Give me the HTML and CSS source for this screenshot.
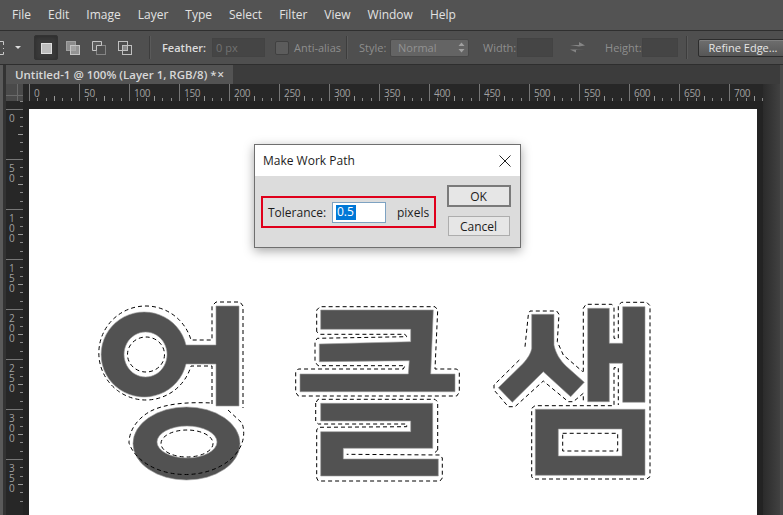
FILE: index.html
```html
<!DOCTYPE html>
<html lang="en">
<head>
<meta charset="utf-8">
<title>Make Work Path</title>
<link rel="stylesheet" href="styles.css">
</head>
<body>
<div class="app">
  <nav class="menubar">
    <span>File</span><span>Edit</span><span>Image</span><span>Layer</span><span>Type</span><span>Select</span><span>Filter</span><span>View</span><span>Window</span><span>Help</span>
  </nav>
  <div class="options">
    <svg class="marquee" width="5" height="16" viewBox="0 0 5 16"><path d="M0 1.5H3.5V5M3.5 8V9M3.5 12V14.5H0" fill="none" stroke="#c8c8c8"/></svg>
    <span class="caret"></span>
    <span class="sep sep-a"></span>
    <div class="modes">
      <span class="mode active"><svg width="14" height="14" viewBox="0 0 14 14"><rect x="2.5" y="2.5" width="10" height="10" fill="#bdbdbd" stroke="#e0e0e0"/></svg></span>
      <span class="mode"><svg width="16" height="16" viewBox="0 0 16 16"><rect x="1.5" y="1.5" width="9" height="9" fill="#8c8c8c" stroke="#a0a0a0"/><rect x="5.5" y="5.5" width="9" height="9" fill="#aaa" fill-opacity=".75" stroke="#c4c4c4"/></svg></span>
      <span class="mode"><svg width="16" height="16" viewBox="0 0 16 16"><rect x="5.5" y="5.5" width="9" height="9" fill="none" stroke="#858585"/><path d="M1.5 1.5H10.5V5.5H5.5V10.5H1.5Z" fill="#5c5c5c" stroke="#c4c4c4"/></svg></span>
      <span class="mode"><svg width="16" height="16" viewBox="0 0 16 16"><rect x="1.5" y="1.5" width="9" height="9" fill="none" stroke="#c0c0c0"/><rect x="5.5" y="5.5" width="9" height="9" fill="none" stroke="#c0c0c0"/><rect x="6" y="6" width="4" height="4" fill="#8a8a8a"/></svg></span>
    </div>
    <span class="sep sep-b"></span>
    <span class="label strong feather-label">Feather:</span>
    <span class="field feather">0 px</span>
    <span class="check"></span>
    <span class="label dim anti">Anti-alias</span>
    <span class="sep sep-c"></span>
    <span class="label dim style-label">Style:</span>
    <span class="select">Normal<svg width="7" height="11" viewBox="0 0 7 11"><path d="M3.5 0.5L6.5 4H0.5ZM3.5 10.5L0.5 7H6.5Z" fill="#a0a0a0"/></svg></span>
    <span class="label dim width-label">Width:</span>
    <span class="field blank"></span>
    <svg class="swap" width="17" height="15" viewBox="0 0 17 15"><path d="M1 5H10V2L16 5.5L10 6.5ZM16 9H7V12.5L1 9.5Z" fill="#858585"/></svg>
    <span class="label dim height-label">Height:</span>
    <span class="field blank"></span>
    <span class="sep sep-d"></span>
    <span class="refine">Refine Edge...</span>
  </div>
  <div class="work">
    <div class="gutter"></div>
    <div class="main">
      <div class="tabs">
        <div class="tab"><span class="tab-title">Untitled-1 @ 100% (Layer 1, RGB/8) *</span><span class="tab-close">×</span></div>
      </div>
      <div class="viewport">
        <div class="corner"></div>
        <div class="hruler">
          <span class="hlead"></span>
          <span class="hm">0</span><span class="hm">50</span><span class="hm">100</span><span class="hm">150</span><span class="hm">200</span><span class="hm">250</span><span class="hm">300</span><span class="hm">350</span><span class="hm">400</span><span class="hm">450</span><span class="hm">500</span><span class="hm">550</span><span class="hm">600</span><span class="hm">650</span><span class="hm">700</span>
        </div>
        <div class="vruler">
          <span class="vlead"></span>
          <span class="vm"><b>0</b></span><span class="vm"><b>50</b></span><span class="vm"><b>100</b></span><span class="vm"><b>150</b></span><span class="vm"><b>200</b></span><span class="vm"><b>250</b></span><span class="vm"><b>300</b></span><span class="vm"><b>350</b></span>
        </div>
        <div class="pasteboard">
          <div class="canvas">
            <svg class="art" width="728" height="406" viewBox="29 109 728 406">
              <g class="shape">
                <path fill-rule="evenodd" d="M216 306H239V406H216V364H186A43 42.5 0 1 1 186 345H216ZM145.500 332A21.500 22.500 0 1 0 145.600 332Z"/>
                <path fill-rule="evenodd" d="M133 443.500A53.500 36.500 0 1 0 240 443.500A53.500 36.500 0 1 0 133 443.500ZM157 442A30 16 0 1 1 217 442A30 16 0 1 1 157 442Z"/>
                <path d="M320.700 310H433.300L430.700 374H455V391.700H300V374H408.300L409.300 360.700L319.300 361.700V344L410.700 341.700V329.300H320.700Z"/>
                <path d="M320.700 403.300H432.700V448.300H343.300V459H438.300V476H320.700V431.700H410.700V421H320.700Z"/>
                <path d="M531.700 314.300H554V345C556 354 560 360 566 366L584.300 382.300L570.700 396.700L543.300 371.700L512.300 402.300L498.300 387.700L523.300 363.300C528 358 531 353 531.700 348.300Z"/>
                <path d="M587.700 308.300H609.300V343.300H622.700V306.700H645V402.300H622.700V363.300H609.300V401.700H587.700Z"/>
                <path fill-rule="evenodd" d="M535.300 409.300H645V475.300H535.300ZM558.300 429V456H622V429Z"/>
              </g>
              <g class="ants">
                <path d="M212 404V366H191A47 47 0 1 1 191 340H212V306L216 302H240L243 306V408"/>
                <path d="M228 410L242 423A57.500 41 0 0 1 129 443A57.500 41 0 0 1 149 412C165 403 190 402 212 403"/>
                <ellipse cx="146" cy="354.500" rx="18.500" ry="17.500"/>
                <ellipse cx="187" cy="443.500" rx="26" ry="13.500"/>
                <path d="M316.700 331.700V310L320 306.700H435L437.700 310L435 369H456.700L459.300 372.300V392.300L456.700 396H298.300L295.700 392.300V372.300L298.300 369H403.300L405 365.700H318L315 361.700V341.700L317.300 338.300L406.700 336.700L405 334.300H320Z"/>
                <path d="M315.700 403V421.700L318.300 424H406.700V426.700L318.300 427.300L316.700 430V478L318.300 481H440L442.300 478V458L440 455L346.700 454.300M437.700 450V402L435 399.300H318L315.700 403M437.700 450L435 452.500"/>
                <path d="M525 346.700L528.300 315L530 311H556.700L559 314.300L557.300 341.700L563.300 355L582.700 371.700M519.300 360L494 385V390L508.300 406.700H515L543.300 381L568.300 401.700H573.300L583.300 393.300V402"/>
                <path d="M583.300 371.700V308.300L586 304.300H611.700L614 307.700V338.300H618.300V305L621.700 302.300H646.700L650 305.700V476.700L646.700 479H533.300L531.700 476.700V408.300L535 405.700H614V367.700H618.300V405"/>
                <rect x="562.700" y="433.300" width="55" height="17.700"/>
              </g>
            </svg>
            <div class="dialog">
              <div class="dlg-title">
                <span>Make Work Path</span>
                <svg width="12" height="12" viewBox="0 0 12 12"><path d="M0.500 0.500L11.500 11.500M11.500 0.500L0.500 11.500" stroke="#222" fill="none"/></svg>
              </div>
              <div class="dlg-body">
                <div class="tolerance">
                  <span class="tol-label">Tolerance:</span>
                  <span class="tol-input"><span class="tol-sel">0.5</span></span>
                  <span class="tol-unit">pixels</span>
                </div>
                <div class="dlg-buttons">
                  <span class="btn btn-ok">OK</span>
                  <span class="btn">Cancel</span>
                </div>
              </div>
            </div>
          </div>
        </div>
      </div>
    </div>
    <div class="scroll"></div>
    <div class="edge"></div>
  </div>
</div>
</body>
</html>
```
FILE: styles.css
```css
* { box-sizing: border-box; }
html, body { margin: 0; height: 100%; overflow: hidden; background: #535353; }
body { font-family: "Open Sans", "Liberation Sans", sans-serif; }

.app { width: 783px; height: 515px; display: flex; flex-direction: column; overflow: hidden; }

/* menu bar */
.menubar {
  height: 31px; flex: none; display: flex; align-items: center; gap: 17px;
  padding: 0 0 2px 12px; background: #535353; border-bottom: 1px solid #2f2f2f;
  color: #e2e2e2; font-size: 12px;
}

/* options bar */
.options {
  height: 34px; flex: none; display: flex; align-items: center;
  background: #4f4f4f; border-bottom: 1px solid #2e2e2e; font-size: 11px;
}
.marquee { flex: none; }
.caret {
  flex: none; margin-left: 10px; width: 0; height: 0;
  border-left: 3px solid transparent; border-right: 3px solid transparent; border-top: 3px solid #ddd;
}
.sep { flex: none; width: 1px; height: 23px; background: #3d3d3d; box-shadow: 1px 0 0 #5a5a5a; }
.sep-a { margin-left: 5px; background: transparent; box-shadow: none; margin-right: 7px; }
.sep-b { margin-left: 11px; }
.sep-c { margin-left: 11px; }
.sep-d { margin-left: 8px; }
.modes { display: flex; flex: none; align-items: center; }
.mode { width: 26px; height: 25px; display: flex; align-items: center; justify-content: center; }
.mode.active { width: 24px; background: #3a3a3a; border: 1px solid #333; border-radius: 2px; box-shadow: inset 0 1px 4px #2c2c2c; margin-right: 2px; }
.label { flex: none; white-space: nowrap; }
.strong { color: #dcdcdc; font-weight: 600; }
.dim { color: #8e8e8e; }
.feather-label { margin-left: 12px; }
.field {
  flex: none; height: 19px; background: #454545; border: 1px solid #434343; color: #727272;
  display: flex; align-items: center; padding-left: 3px;
}
.feather { width: 53px; margin-left: 6px; }
.check { flex: none; width: 14px; height: 14px; margin-left: 10px; background: #5c5c5c; border: 1px solid #404040; border-radius: 2px; }
.anti { margin-left: 5px; width: 41px; }
.style-label { margin-left: 12px; width: 25px; }
.select {
  flex: none; width: 79px; height: 18px; margin-left: 6px; padding: 0 3px 0 7px;
  display: flex; align-items: center; justify-content: space-between;
  background: #646464; border: 1px solid #484848; border-radius: 2px; color: #929292;
}
.width-label { margin-left: 14px; width: 29px; }
.blank { width: 36px; margin-left: 5px; }
.swap { flex: none; margin: 0 0 0 16px; }
.height-label { margin-left: 19px; width: 32px; }
.refine {
  flex: none; width: 90px; height: 18px; margin-left: 11px; display: flex; align-items: center; justify-content: center;
  color: #e6e6e6; border: 1px solid #2c2c2c; border-radius: 2px;
  background: linear-gradient(#6e6e6e, #565656); box-shadow: inset 0 1px 0 #808080;
}

/* document area */
.work { flex: 1; min-height: 0; display: flex; }
.gutter { flex: none; width: 6px; background: linear-gradient(90deg, #5a5a5a 0 3px, #333 3px 6px); }
.main { flex: 1; min-width: 0; display: flex; flex-direction: column; }
.edge { flex: none; width: 3px; background: #4a4a4a; position: absolute; right: 0; top: 65px; bottom: 0; }
.tabs { height: 19px; flex: none; display: flex; background: #3c3c3c; margin-right: -17px; position: relative; }
.tab {
  width: 227px; display: flex; align-items: center; justify-content: space-between; padding: 0 9px 0 9px;
  background: #535353; color: #d8d8d8; font-size: 11.500px; font-weight: 600; white-space: nowrap;
}
.tab-close { color: #d8d8d8; font-size: 12px; }
.scroll { flex: none; width: 17px; margin-top: 19px; background: linear-gradient(90deg, #2b2b2b, #414141); margin-right: 3px; }

.viewport { flex: 1; min-height: 0; display: grid; grid-template-columns: 17px 1fr; grid-template-rows: 17px 1fr; overflow: hidden; }
.corner {
  background-color: #4a4a4a;
  background-image: linear-gradient(#6a6a6a 0 0), linear-gradient(#6a6a6a 0 0);
  background-repeat: no-repeat; background-size: 100% 1px, 1px 100%; background-position: 0 11px, 11px 0;
}

/* rulers */
.hruler {
  display: flex; overflow: hidden; background: #272727; color: #a0a0a0; font-size: 10px; line-height: 12px;
}
.hlead {
  flex: none; width: 6px;
  background: repeating-linear-gradient(90deg, #888 0 1px, transparent 1px 8.333px) -2.333px 100% / 100% 3px no-repeat;
}
.hm {
  flex: none; width: 50px; padding: 3px 0 0 4px; letter-spacing: -.3px;
  border-left: 1px solid #777;
  background:
    linear-gradient(#999, #999) 24px 100% / 1px 5px no-repeat,
    repeating-linear-gradient(90deg, transparent 0 7.333px, #888 7.333px 8.333px) 0 100% / 100% 3px no-repeat;
}
.vruler { display: flex; flex-direction: column; overflow: hidden; background: #272727; color: #a0a0a0; font-size: 10px; }
.vlead { flex: none; height: 8px; border-bottom: 0; background: repeating-linear-gradient(#888 0 1px, transparent 1px 8.333px) 100% 0 / 3px 100% no-repeat; }
.vm {
  flex: none; height: 50px; padding: 3px 0 0 3px; border-top: 1px solid #777;
  background:
    linear-gradient(#999, #999) 100% 24px / 5px 1px no-repeat,
    repeating-linear-gradient(transparent 0 7.333px, #888 7.333px 8.333px) 100% 0 / 3px 100% no-repeat;
}
.vm b { display: block; width: 7px; font-weight: 400; line-height: 10px; word-break: break-all; }

/* canvas */
.pasteboard { min-width: 0; min-height: 0; overflow: hidden; background: #232323; padding: 8px 6px 0; }
.canvas { position: relative; width: 728px; height: 406px; background: #fff; }
.art { display: block; }
.shape path { fill: #525252; stroke: #9a9a9a; stroke-width: .6; }
.ants path, .ants ellipse, .ants rect { fill: none; stroke: #000; stroke-width: 1; stroke-dasharray: 4 3; }

/* dialog */
.dialog {
  position: absolute; left: 225px; top: 35px; width: 267px; height: 104px;
  background: #dcdcdc; border: 1px solid #6f6f6f; box-shadow: 0 3px 10px rgba(0,0,0,.35);
  display: flex; flex-direction: column; color: #1c1c1c; font-size: 12px;
}
.dlg-title {
  height: 31px; flex: none; background: #fff; display: flex; align-items: center; justify-content: space-between;
  padding: 0 9px 0 8px; font-size: 12px;
}
.dlg-body { flex: 1; position: relative; }
.tolerance {
  position: absolute; left: 6px; top: 20px; width: 175px; height: 32px; border: 2px solid #e0001b;
  display: flex; align-items: center; padding-left: 5px;
}
.tol-label { width: 59px; flex: none; }
.tol-input { flex: none; width: 54px; height: 21px; margin-left: 5px; background: #fff; border: 1px solid #7da2c2; padding: 2px 0 0 3px; line-height: 14px; }
.tol-sel { display: inline-block; background: #0078d7; color: #fff; height: 15px; width: 20px; padding-left: 1px; }
.tol-unit { margin-left: 11px; }
.dlg-buttons { position: absolute; left: 191px; top: 9px; width: 65px; display: flex; flex-direction: column; align-items: center; gap: 9px; }
.btn { width: 62px; height: 20px; display: flex; align-items: center; justify-content: center; background: #e6e6e6; border: 1px solid #adadad; }
.btn-ok { width: 64px; height: 22px; border: 2px solid #7a7a7a; }
```
